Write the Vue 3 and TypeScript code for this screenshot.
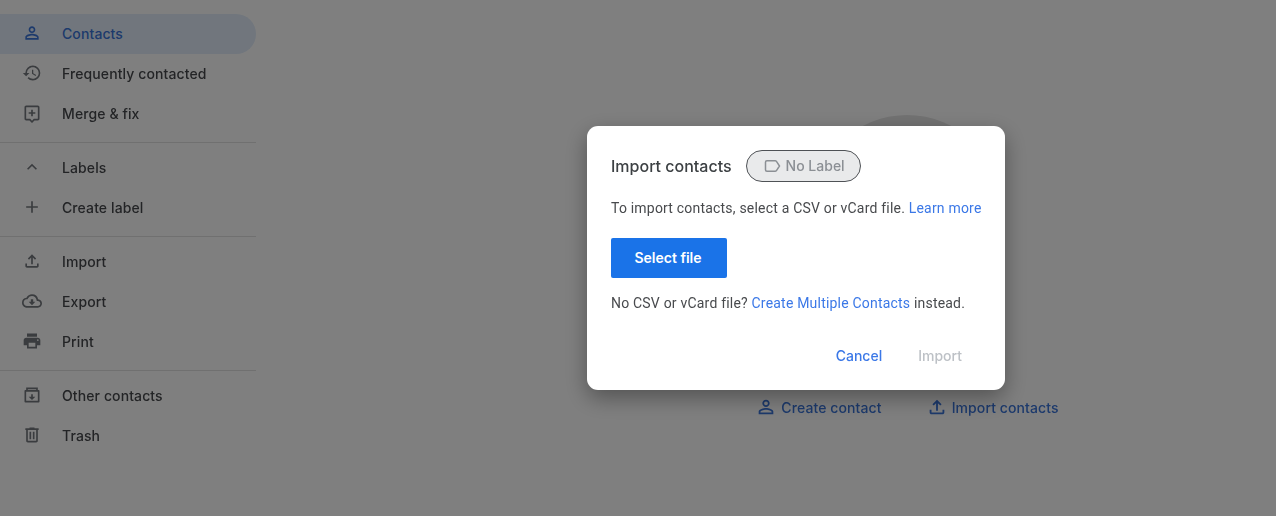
<script setup lang="ts">
interface Item { label: string; icon: string; active?: boolean }
const p = {
  person: 'M12 5.9a2.1 2.1 0 1 1 0 4.2 2.1 2.1 0 0 1 0-4.2m0 9c2.97 0 6.1 1.46 6.1 2.1v1.1H5.9V17c0-.64 3.13-2.1 6.1-2.1M12 4C9.79 4 8 5.79 8 8s1.79 4 4 4 4-1.79 4-4-1.79-4-4-4zm0 9c-2.67 0-8 1.34-8 4v3h16v-3c0-2.66-5.33-4-8-4z',
  history: 'M13 3a9 9 0 0 0-9 9H1l3.89 3.89.07.14L9 12H6c0-3.87 3.13-7 7-7s7 3.13 7 7-3.13 7-7 7c-1.93 0-3.68-.79-4.94-2.06l-1.42 1.42A8.954 8.954 0 0 0 13 21a9 9 0 0 0 0-18zm-1 5v5l4.28 2.54.72-1.21-3.5-2.08V8H12z',
  merge: 'M19 3H5c-1.1 0-2 .9-2 2v14c0 1.1.9 2 2 2h4l3 3 3-3h4c1.1 0 2-.9 2-2V5c0-1.1-.9-2-2-2zm0 16h-4.83L12 21.17 9.83 19H5V5h14v14zM11 16h2v-3h3v-2h-3V8h-2v3H8v2h3z',
  up: 'M12 8l-6 6 1.41 1.41L12 10.83l4.59 4.58L18 14z',
  plus: 'M19 13h-6v6h-2v-6H5v-2h6V5h2v6h6v2z',
  upload: 'M18 15v3H6v-3H4v3c0 1.1.9 2 2 2h12c1.1 0 2-.9 2-2v-3h-2zM7 9l1.41 1.41L11 7.83V16h2V7.83l2.59 2.58L17 9l-5-5-5 5z',
  cloud: 'M19.35 10.04A7.49 7.49 0 0 0 12 4C9.11 4 6.6 5.64 5.35 8.04A5.994 5.994 0 0 0 0 14c0 3.31 2.69 6 6 6h13c2.76 0 5-2.24 5-5 0-2.64-2.05-4.78-4.65-4.96zM19 18H6c-2.21 0-4-1.79-4-4 0-2.05 1.53-3.76 3.56-3.97l1.07-.11.5-.95A5.469 5.469 0 0 1 12 6c2.62 0 4.88 1.86 5.39 4.43l.3 1.5 1.53.11A2.98 2.98 0 0 1 22 15c0 1.65-1.35 3-3 3zm-5.55-8h-2.9v3H8l4 4 4-4h-2.55z',
  print: 'M19 8H5c-1.66 0-3 1.34-3 3v6h4v4h12v-4h4v-6c0-1.66-1.34-3-3-3zm-3 11H8v-5h8v5zm3-7c-.55 0-1-.45-1-1s.45-1 1-1 1 .45 1 1-.45 1-1 1zm-1-9H6v4h12V3z',
  archive: 'M20 6h-1V3H5v3H4c-.6 0-1 .4-1 1v13c0 .6.4 1 1 1h16c.6 0 1-.4 1-1V7c0-.6-.4-1-1-1zM7 5h10v1H7V5zm12 14H5V8h14v11zm-7-1l4-4h-3v-3h-2v3H8l4 4z',
  trash: 'M15 4V3H9v1H4v2h1v13c0 1.1.9 2 2 2h10c1.1 0 2-.9 2-2V6h1V4h-5zm2 15H7V6h10v13zM9 8h2v9H9zm4 0h2v9h-2z',
}
const groups: Item[][] = [
  [
    { label: 'Contacts', icon: p.person, active: true },
    { label: 'Frequently contacted', icon: p.history },
    { label: 'Merge & fix', icon: p.merge },
  ],
  [
    { label: 'Labels', icon: p.up },
    { label: 'Create label', icon: p.plus },
  ],
  [
    { label: 'Import', icon: p.upload },
    { label: 'Export', icon: p.cloud },
    { label: 'Print', icon: p.print },
  ],
  [
    { label: 'Other contacts', icon: p.archive },
    { label: 'Trash', icon: p.trash },
  ],
]
</script>

<template>
  <div class="page">
    <aside class="side">
      <section v-for="(g, i) in groups" :key="i" class="group">
        <a v-for="it in g" :key="it.label" class="item" :class="{ active: it.active }">
          <svg class="ic" viewBox="0 0 24 24"><path :d="it.icon" /></svg>
          <span>{{ it.label }}</span>
        </a>
      </section>
    </aside>
    <main class="main">
      <div class="circle"></div>
      <div class="actions">
        <a class="act"><svg viewBox="0 0 24 24"><path :d="p.person" /></svg>Create contact</a>
        <a class="act"><svg viewBox="0 0 24 24"><path :d="p.upload" /></svg>Import contacts</a>
      </div>
    </main>
    <div class="scrim">
      <div class="dialog">
        <header class="head">
          <h2>Import contacts</h2>
          <span class="chip">
            <svg viewBox="0 0 18 18"><path d="M2.5 5.2c0-.9.6-1.5 1.4-1.5h8.3c.4 0 .8.2 1.1.5l3.2 4.8-3.2 4.8c-.3.3-.7.5-1.1.5H3.9c-.8 0-1.4-.6-1.4-1.5z" /></svg>
            No Label
          </span>
        </header>
        <p class="line">To import contacts, select a CSV or vCard file. <a>Learn more</a></p>
        <button class="select">Select file</button>
        <p class="line second">No CSV or vCard file? <a>Create Multiple Contacts</a> instead.</p>
        <footer class="foot">
          <span class="cancel">Cancel</span>
          <span class="import">Import</span>
        </footer>
      </div>
    </div>
  </div>
</template>

<style>
html, body { margin: 0; background: #fff; overflow: hidden; }
</style>

<style scoped>
.page { position: relative; display: flex; width: 1276px; height: 516px; overflow: hidden; background: #fff; font-family: Inter, "Open Sans", sans-serif; }
.side { width: 256px; flex: none; padding-top: 14px; filter: blur(.35px); }
.group + .group { margin-top: 8px; padding-top: 5px; border-top: 1px solid #e0e0e0; }
.item { display: flex; align-items: center; height: 40px; box-sizing: border-box; padding-bottom: 2px; font-size: 14px; font-weight: 500; letter-spacing: .1px; color: #47494d; border-radius: 0 20px 20px 0; }
.item .ic { width: 20px; height: 20px; margin: 0 20px 0 22px; fill: #75797e; }
.item.active { background: #e2edfb; color: #3a74d8; }
.item.active .ic { fill: #3a74d8; }
.main { flex: 1; display: flex; flex-direction: column; align-items: center; padding-left: 282px; padding-top: 115px; box-sizing: border-box; filter: blur(.35px); }
.circle { width: 190px; height: 190px; border-radius: 50%; background: #e4e4e4; }
.actions { display: flex; gap: 44px; margin-top: 91px; }
.act { display: flex; align-items: center; gap: 4px; font-size: 14px; font-weight: 500; letter-spacing: .1px; color: #3a74d8; }
.act svg { width: 22px; height: 22px; fill: #3a74d8; }
.scrim { position: absolute; inset: 0; background: rgba(0,0,0,.5); display: flex; align-items: center; justify-content: center; padding-left: 316px; }
.dialog { width: 418px; height: 264px; box-sizing: border-box; padding: 24px; background: #fff; border-radius: 11px; box-shadow: 0 8px 22px rgba(0,0,0,.35); color: #484a4d; font-family: Roboto, "Liberation Sans", sans-serif; display: flex; flex-direction: column; }
.head { display: flex; align-items: center; gap: 14px; filter: blur(.3px); }
.head h2 { margin: 0; font: 500 16px Inter, sans-serif; color: #3c4043; }
.chip { display: flex; align-items: center; gap: 5px; height: 32px; width: 115px; box-sizing: border-box; padding: 0 0 1px 16px; border: 1.5px solid #4f5256; border-radius: 16px; background: #e9eaeb; color: #8b8f94; font: 500 14px Inter, sans-serif; }
.chip svg { width: 18px; height: 18px; fill: none; stroke: #8b8f94; stroke-width: 1.5; flex: none; }
.line { margin: 16px 0 0; font-size: 14px; line-height: 20px; letter-spacing: .2px; white-space: nowrap; filter: blur(.25px); }
.line a { color: #3b78e7; }
.select { margin-top: 20px; width: 116px; height: 40px; border: 0; border-radius: 2px; background: #1a73e8; color: #fff; font: 600 14px Inter, sans-serif; padding: 0 2px 2px 0; }
.second { margin-top: 15px; }
.foot { margin-top: auto; display: flex; justify-content: flex-end; gap: 36px; padding: 0 19px 0 0; font: 500 14px Inter, sans-serif; line-height: 20px; filter: blur(.25px); }
.cancel { color: #3b78e7; }
.import { color: #bdc1c6; }
</style>
